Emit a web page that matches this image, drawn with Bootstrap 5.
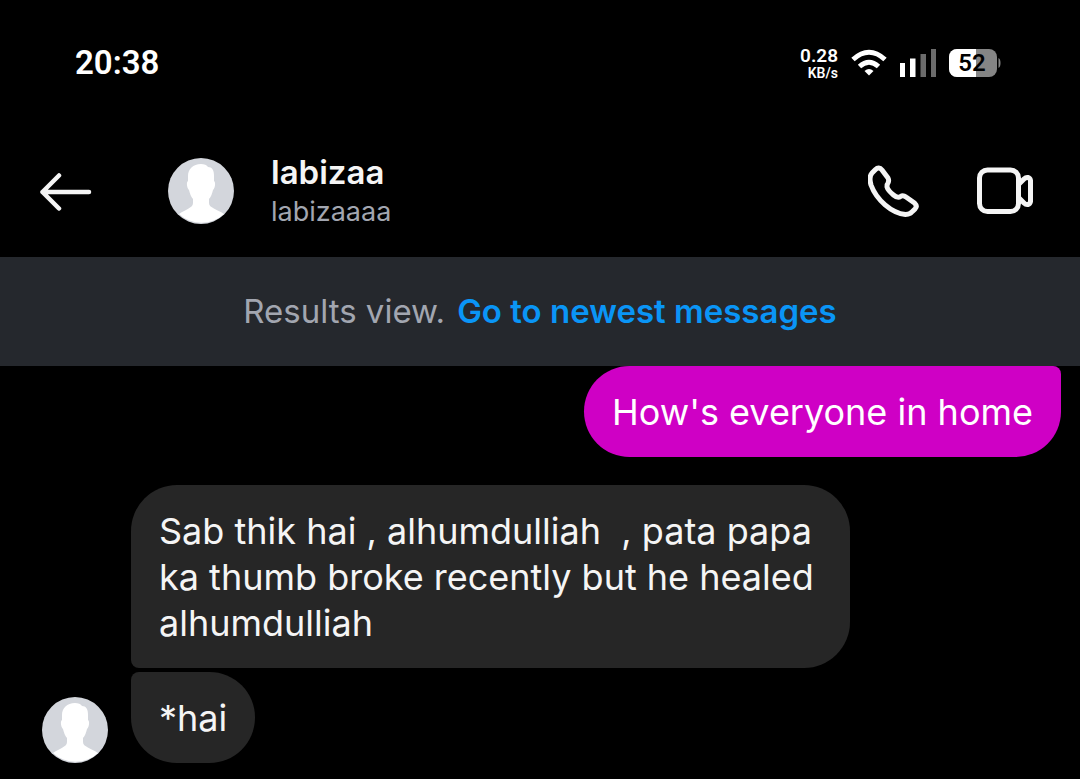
<!DOCTYPE html>
<html lang="en">
<head>
<meta charset="utf-8">
<meta name="viewport" content="width=device-width, initial-scale=1">
<title>labizaa</title>
<link href="https://cdn.jsdelivr.net/npm/bootstrap@5.3.0/dist/css/bootstrap.min.css" rel="stylesheet">
<style>
  body { background: #000; color: #f5f5f5; font-family: Inter, "Liberation Sans", sans-serif; }
  svg { display: block; flex: none; }
  .status-bar { height: 126px; padding: 0 78px 0 75px; font-family: Roboto, sans-serif; font-weight: 600; color: #fff; }
  .status-icons { column-gap: 13px; }
  .clock { font-size: 33px; line-height: 40px; }
  .speed { font-size: 19px; line-height: 20px; text-align: right; }
  .speed-unit { font-size: 14px; line-height: 14px; }
  .battery-text { font-size: 24px; font-weight: 600; }
  .chat-header { height: 131px; padding: 0 44px 2px 38px; }
  .icon-btn { background: none; border: 0; padding: 0; color: #f5f5f5; }
  .who { margin-left: 37px; padding-top: 3px; }
  .display-name { font-size: 33px; line-height: 40px; font-weight: 600; margin: 0; }
  .user-name { font-size: 27px; line-height: 40px; color: #a2a6b0; }
  .header-avatar { margin-left: 75px; }
  .results-banner { background: #25282d; min-height: 109px; padding-bottom: 2px; font-size: 33px; line-height: 44px; color: #a2a6b0; column-gap: 12px; }
  .results-banner a { color: #0a95f6; font-weight: 600; }
  .thread { padding: 0 19px 16px 42px; }
  .bubble { background: #262626; padding: 23px 28px 22px; font-size: 36px; line-height: 46px; max-width: 719px; border-radius: 46px; }
  .bubble-out { background: #cf00c5; color: #fff; border-top-right-radius: 8px; margin-bottom: 28px; }
  .bubble-first { border-bottom-left-radius: 8px; }
  .bubble-last { border-top-left-radius: 8px; }
  .incoming { column-gap: 23px; }
</style>
</head>
<body>
<svg width="0" height="0" class="position-absolute" aria-hidden="true">
  <symbol id="person" viewBox="0 0 66 66">
    <circle cx="33" cy="33" r="33" fill="#d3d6dc"/>
    <path fill="#fff" d="M33 6c-8 0-13 5-13 12v5c-2 1-1 8 1 9 1 4 2 7 4 9v4c0 5-7 6-14 11A33 33 0 0 0 56 56c-7-5-15-6-15-11v-4c2-2 3-5 4-9 2-1 3-8 1-9v-5c0-6-2-9-6-9-1-2-4-3-7-3z"/>
  </symbol>
</svg>

<div class="status-bar d-flex align-items-center justify-content-between">
  <div class="clock">20:38</div>
  <div class="status-icons d-flex align-items-center">
    <div class="speed">
      <div>0.28</div>
      <div class="speed-unit">KB/s</div>
    </div>
    <svg width="36" height="28" viewBox="0 0 36 28" fill="none" stroke="#fff" stroke-width="5" aria-hidden="true">
      <path d="M2 10.500Q18-4 34 10.500M8.500 17.500Q18 9 27.500 17.500"/>
      <path d="M18 26.500l-4.500-4.500Q18 18 22.500 22z" fill="#fff" stroke="none"/>
    </svg>
    <svg width="36" height="28" viewBox="0 0 36 28" fill="#fff" aria-hidden="true">
      <path d="M0 14h5v14H0zM10 9.500h5.500V28H10z"/>
      <path fill="#6b6b6b" d="M20.500 5H26v23h-5.500zM31 0h5v28h-5z"/>
    </svg>
    <svg width="53" height="28" viewBox="0 0 53 28" role="img" aria-label="Battery 52 percent">
      <rect width="48" height="28" rx="8" fill="#858585"/>
      <path fill="#fff" d="M8 0h19v28H8a8 8 0 0 1-8-8V8a8 8 0 0 1 8-8z"/>
      <path fill="#858585" d="M49.500 9q2 1 2 5t-2 5z"/>
      <text class="battery-text" x="23" y="22" text-anchor="middle" fill="#000">52</text>
    </svg>
  </div>
</div>

<header class="chat-header d-flex align-items-center">
  <button class="icon-btn" aria-label="Back">
    <svg width="55" height="40" viewBox="0 0 55 40" fill="none" stroke="currentColor" stroke-width="4.500" stroke-linecap="round" stroke-linejoin="round">
      <path d="M21 4.500L4.500 21 21 37.500M4.500 21h46.500"/>
    </svg>
  </button>
  <svg class="header-avatar" width="66" height="66" aria-hidden="true"><use href="#person"/></svg>
  <div class="who flex-grow-1">
    <h1 class="display-name">labizaa</h1>
    <div class="user-name">labizaaaa</div>
  </div>
  <button class="icon-btn me-5" aria-label="Voice call">
    <svg width="60" height="56" viewBox="0 0 60 56" fill="none" stroke="currentColor" stroke-width="5" stroke-linejoin="round">
      <path d="M7.500 6.500L4 10C1.500 13 1.500 17 3 22 8.500 37 23.500 50 37.500 51.500c4 0 5-1 9.500-5.500 2-2 1.500-4-.5-6L38 34c-2-1.500-4-1.500-5.500-.5-2 1.500-4 1-7-1.500s-6-6-6.500-8c0-2 0-3 1-4 1-2 1-3 0-5L14 7c-2-2.500-4.500-2.500-6.500-.5z"/>
    </svg>
  </button>
  <button class="icon-btn" aria-label="Video call">
    <svg width="60" height="50" viewBox="0 0 60 50" fill="none" stroke="currentColor" stroke-width="5" stroke-linejoin="round">
      <rect x="3.500" y="4" width="39" height="41.500" rx="8"/>
      <path d="M43 18l5-5q2-2 4-1.500t2.500 3v21q-.5 2.500-2.500 3t-4-1.500l-5-5"/>
    </svg>
  </button>
</header>

<div class="results-banner d-flex align-items-center justify-content-center flex-wrap">
  <span>Results view.</span>
  <a href="#newest" class="text-decoration-none">Go to newest messages</a>
</div>

<main class="thread d-flex flex-column">
  <div class="bubble bubble-out align-self-end">How's everyone in home</div>
  <div class="incoming d-flex align-items-end">
    <svg width="66" height="66" aria-hidden="true"><use href="#person"/></svg>
    <div class="d-flex flex-column align-items-start gap-1" id="newest">
      <div class="bubble bubble-first">Sab thik hai , alhumdulliah&nbsp; , pata papa ka thumb broke recently but he healed alhumdulliah</div>
      <div class="bubble bubble-last">*hai</div>
    </div>
  </div>
</main>
<script src="https://cdn.jsdelivr.net/npm/bootstrap@5.3.0/dist/js/bootstrap.bundle.min.js"></script>
</body>
</html>
